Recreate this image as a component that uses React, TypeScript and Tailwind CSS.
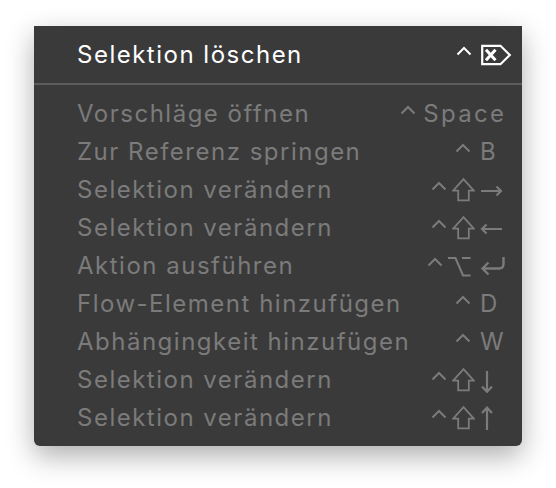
import React from "react";

type Mod = "ctrl" | "shift" | "opt";
type KeyIcon = "right" | "left" | "return" | "down" | "up";

const GRAY = "#7b7b7b";

function Caret({ color }: { color: string }) {
  return (
    <svg width="16" height="26" viewBox="0 0 16 26" className="block">
      <path d="M1.5 12.5 L8 6 L14.5 12.5" fill="none" stroke={color} strokeWidth="2" strokeLinejoin="miter" />
    </svg>
  );
}

function Shift({ color }: { color: string }) {
  return (
    <svg width="23" height="26" viewBox="0 0 23 26" className="block">
      <path
        d="M11.5 2.2 L21.8 13.6 H16.8 V23.4 H6.2 V13.6 H1.2 Z"
        fill="none"
        stroke={color}
        strokeWidth="1.8"
        strokeLinejoin="miter"
      />
    </svg>
  );
}

function Opt({ color }: { color: string }) {
  return (
    <svg width="23" height="26" viewBox="0 0 23 26" className="block">
      <path d="M0 5 H7.5 L15 22.5 H22.5 M14 5 H22.5" fill="none" stroke={color} strokeWidth="2.1" />
    </svg>
  );
}

function KeyGlyph({ icon, color }: { icon: KeyIcon; color: string }) {
  if (icon === "right" || icon === "left") {
    const d =
      icon === "right"
        ? "M1 14 H21 M16.5 9.5 L21 14 L16.5 18.5"
        : "M22 14 H2 M6.5 9.5 L2 14 L6.5 18.5";
    return (
      <svg width="23" height="26" viewBox="0 0 23 26" className="block">
        <path d={d} fill="none" stroke={color} strokeWidth="2.2" />
      </svg>
    );
  }
  if (icon === "return") {
    return (
      <svg width="26" height="26" viewBox="0 0 26 26" className="block">
        <path
          d="M23.5 4 V11 Q23.5 15.5 19 15.5 H2.5 M8.5 9.5 L2.5 15.5 L8.5 21.5"
          fill="none"
          stroke={color}
          strokeWidth="2.4"
        />
      </svg>
    );
  }
  if (icon === "down") {
    return (
      <svg width="14" height="26" viewBox="0 0 14 26" className="block">
        <path d="M7 4 V25 M2 19.5 L7 24.8 L12 19.5" fill="none" stroke={color} strokeWidth="2.2" />
      </svg>
    );
  }
  return (
    <svg width="14" height="26" viewBox="0 0 14 26" className="block">
      <path d="M7 25 V2.5 M2 8 L7 2.7 L12 8" fill="none" stroke={color} strokeWidth="2.2" />
    </svg>
  );
}

function DeleteFwd() {
  return (
    <svg width="31" height="26" viewBox="0 0 31 26" className="block">
      <path d="M1.2 3.8 H19.5 L28.8 13 L19.5 22.2 H1.2 Z" fill="none" stroke="#ffffff" strokeWidth="2.2" strokeLinejoin="miter" />
      <path d="M5 7.8 L14.5 18.2 M14.5 7.8 L5 18.2" fill="none" stroke="#ffffff" strokeWidth="3" />
    </svg>
  );
}

type Row = {
  label: string;
  space?: boolean;
  mods?: Mod[];
  key?: string;
  keyIcon?: KeyIcon;
  mr?: string;
};

const rows: Row[] = [
  { label: "Vorschläge öffnen", space: true },
  { label: "Zur Referenz springen", mods: ["ctrl"], key: "B", mr: "mr-[9px]" },
  { label: "Selektion verändern", mods: ["ctrl", "shift"], keyIcon: "right", mr: "mr-[5px]" },
  { label: "Selektion verändern", mods: ["ctrl", "shift"], keyIcon: "left", mr: "mr-[5px]" },
  { label: "Aktion ausführen", mods: ["ctrl", "opt"], keyIcon: "return", mr: "mr-[9px]" },
  { label: "Flow-Element hinzufügen", mods: ["ctrl"], key: "D", mr: "mr-[9px]" },
  { label: "Abhängingkeit hinzufügen", mods: ["ctrl"], key: "W", mr: "mr-[9px]" },
  { label: "Selektion verändern", mods: ["ctrl", "shift"], keyIcon: "down", mr: "mr-[5px]" },
  { label: "Selektion verändern", mods: ["ctrl", "shift"], keyIcon: "up", mr: "mr-[5px]" },
];

function ModGlyph({ m, color }: { m: Mod; color: string }) {
  if (m === "ctrl") return <Caret color={color} />;
  if (m === "shift") return <Shift color={color} />;
  return <Opt color={color} />;
}

export default function App() {
  return (
    <div
      className="w-[556px] h-[488px] bg-white pt-[26px] pl-[34px]"
      style={{ fontFamily: "Inter, 'Helvetica Neue', Arial, sans-serif" }}
    >
      <div className="w-[488px] bg-[#3a3a3a] rounded-b-[6px] shadow-[0_10px_28px_rgba(0,0,0,0.32)] pb-[9px]">
        <div className="flex items-center h-[57px] pl-[43px] pr-[10px]">
          <span className="flex-1 text-[24px] leading-[38px] tracking-[1.5px] text-white">Selektion löschen</span>
          <div className="flex items-center mr-[8px]">
            <Caret color="#ffffff" />
          </div>
          <div className="w-[32px] flex items-center pl-[1px]">
            <DeleteFwd />
          </div>
        </div>
        <div className="h-[2px] bg-[#5c5c5c]" />
        <div className="pt-[10px] text-[#7b7b7b]">
          {rows.map((r, i) =>
            r.space ? (
              <div key={i} className="flex items-center h-[38px] pl-[43px] pr-[18px]">
                <span className="flex-1 text-[24px] leading-[38px] tracking-[1.5px]">{r.label}</span>
                <div className="flex items-center gap-[7px]">
                  <Caret color={GRAY} />
                  <span className="text-[24px] leading-[38px] tracking-[2.3px] -mr-[2.3px]">Space</span>
                </div>
              </div>
            ) : (
              <div key={i} className="flex items-center h-[38px] pl-[43px] pr-[10px]">
                <span className="flex-1 text-[24px] leading-[38px] tracking-[1.5px] whitespace-nowrap">{r.label}</span>
                <div className={`flex items-center gap-[5px] ${r.mr}`}>
                  {r.mods?.map((m, j) => (
                    <ModGlyph key={j} m={m} color={GRAY} />
                  ))}
                </div>
                <div className="w-[32px] flex items-center">
                  {r.key ? (
                    <span className="text-[24px] leading-[38px]">{r.key}</span>
                  ) : r.keyIcon ? (
                    <KeyGlyph icon={r.keyIcon} color={GRAY} />
                  ) : null}
                </div>
              </div>
            )
          )}
        </div>
      </div>
    </div>
  );
}
